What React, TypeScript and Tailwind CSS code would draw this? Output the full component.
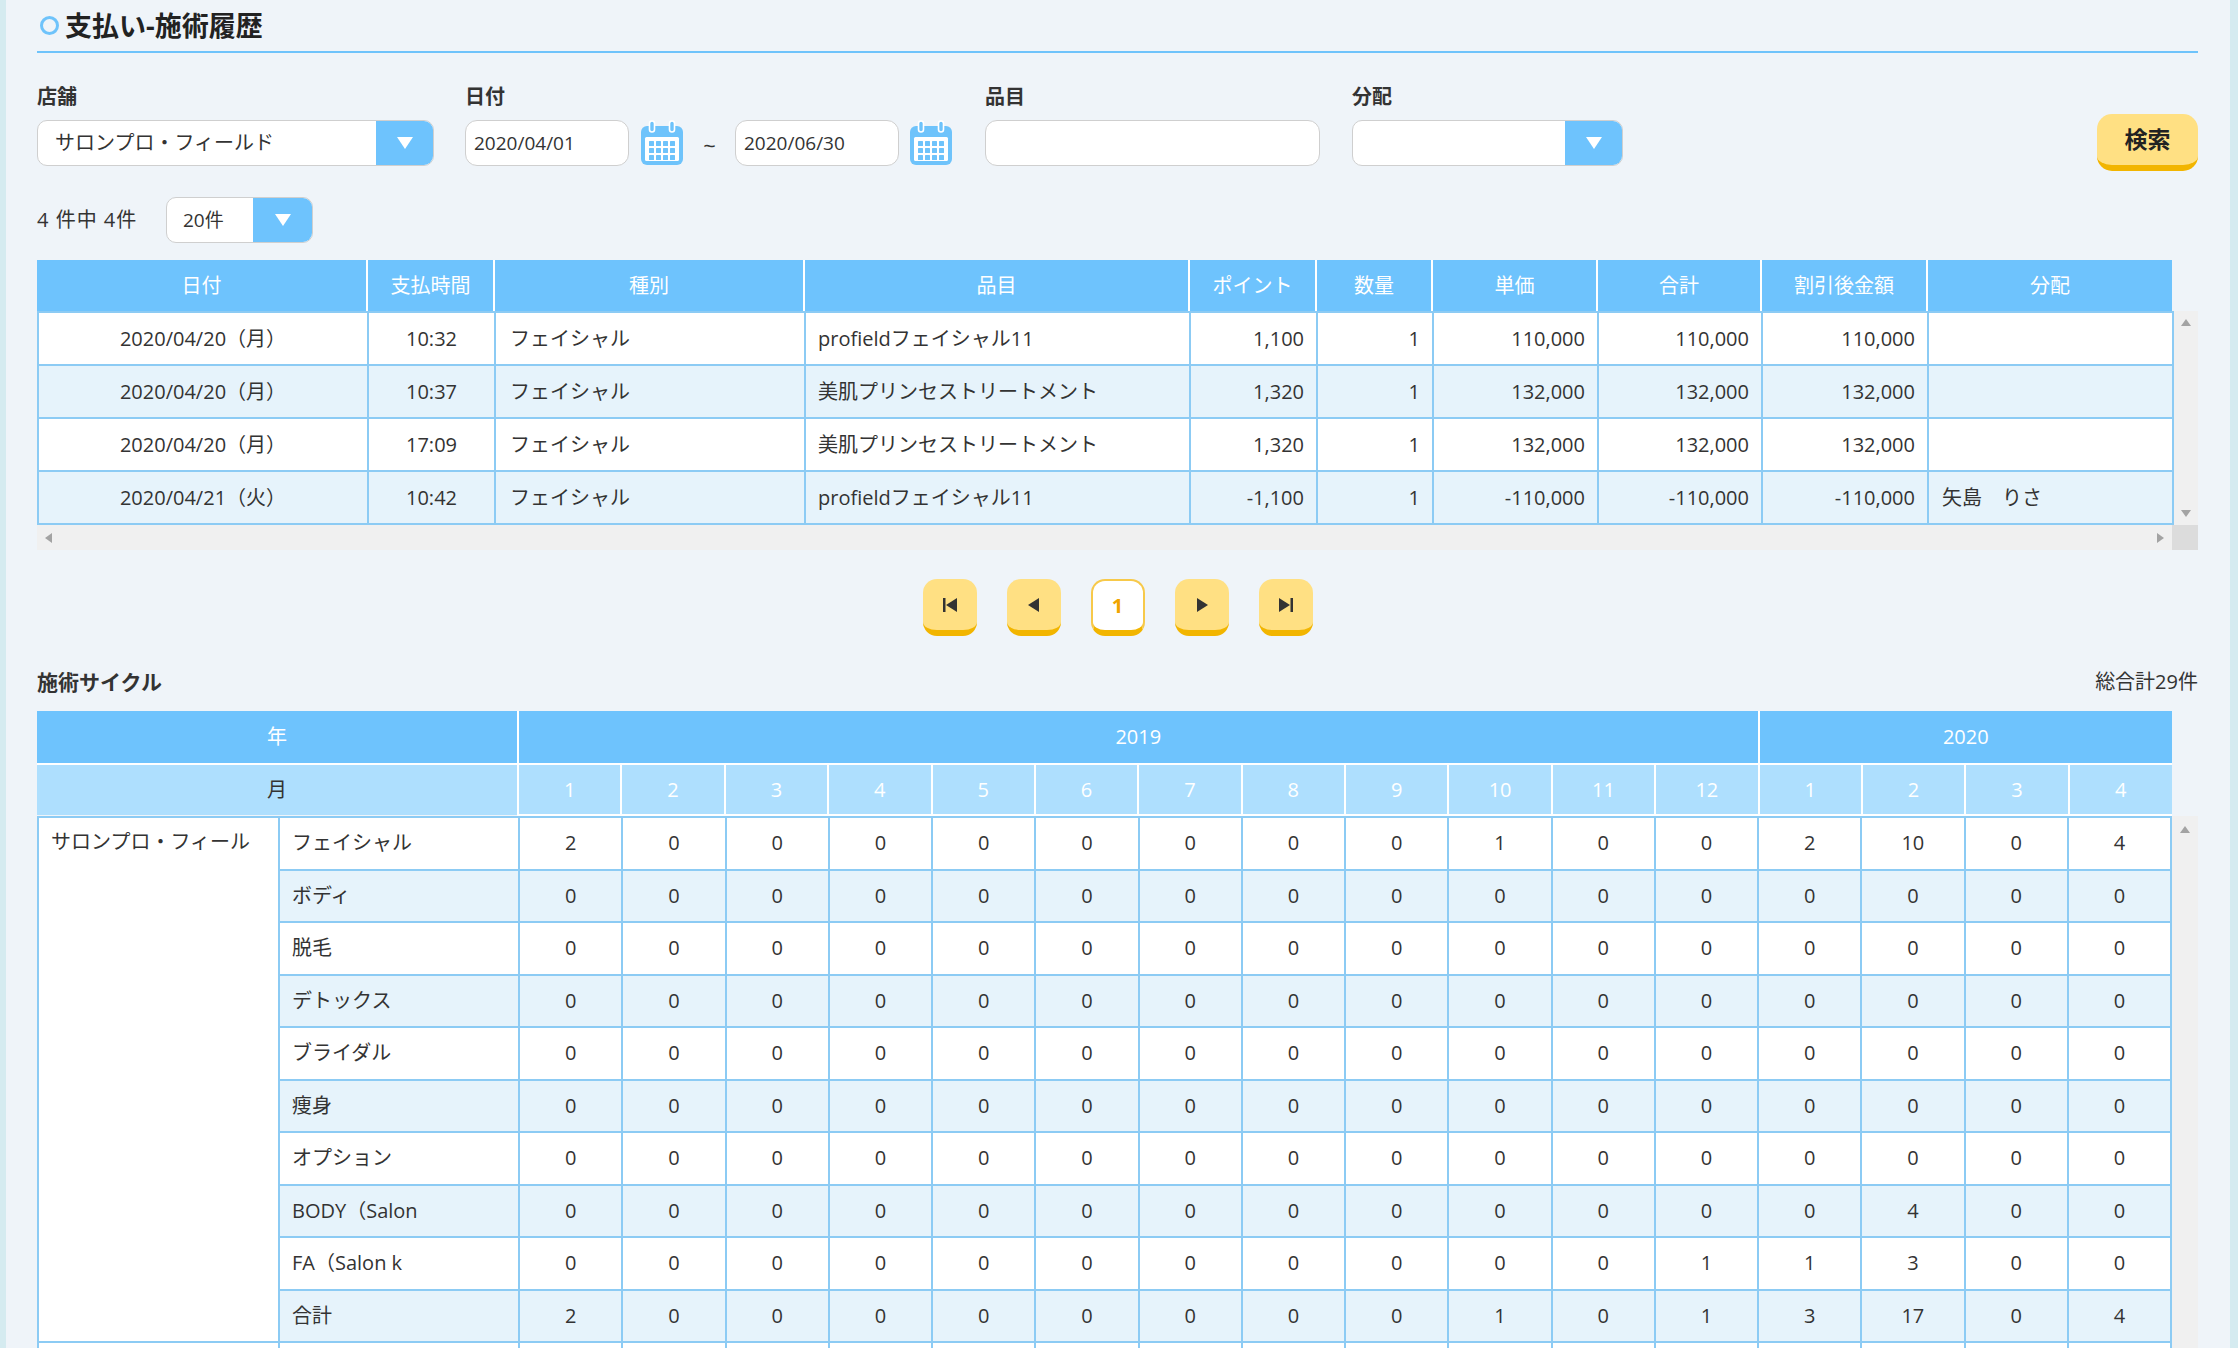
import React from "react";

const font = "font-['Open_Sans','Noto_Sans_CJK_JP',sans-serif]";

function DownTriangle() {
  return (
    <svg width="18" height="14" viewBox="0 0 18 14">
      <path d="M1 1h16L9 13z" fill="#fff" />
    </svg>
  );
}

function CalendarIcon() {
  const cells = [];
  for (let r = 0; r < 3; r++) {
    for (let c = 0; c < 4; c++) {
      cells.push(<rect key={`${r}-${c}`} x={9 + c * 7} y={21 + r * 7} width="5" height="5" rx="0.5" fill="#6ec3fb" />);
    }
  }
  return (
    <svg width="44" height="46" viewBox="0 0 44 46">
      <rect x="1" y="6" width="42" height="39" rx="6" fill="#6ec3fb" />
      <rect x="5" y="17" width="34" height="24" rx="1.5" fill="#fff" />
      <rect x="9.5" y="1" width="5" height="11" rx="2.5" fill="#6ec3fb" stroke="#fff" strokeWidth="1.6" />
      <rect x="29.5" y="1" width="5" height="11" rx="2.5" fill="#6ec3fb" stroke="#fff" strokeWidth="1.6" />
      {cells}
    </svg>
  );
}

function PageIcon({ kind }: { kind: "first" | "prev" | "next" | "last" }) {
  return (
    <svg width="18" height="16" viewBox="0 0 18 16" fill="#333">
      {kind === "first" && (
        <>
          <rect x="2" y="1" width="2.5" height="14" />
          <path d="M16 1v14L5 8z" />
        </>
      )}
      {kind === "prev" && <path d="M14 1v14L3 8z" />}
      {kind === "next" && <path d="M4 1v14l11-7z" />}
      {kind === "last" && (
        <>
          <path d="M2 1v14l11-7z" />
          <rect x="13.5" y="1" width="2.5" height="14" />
        </>
      )}
    </svg>
  );
}

const historyRows = [
  ["2020/04/20（月）", "10:32", "フェイシャル", "profieldフェイシャル11", "1,100", "1", "110,000", "110,000", "110,000", ""],
  ["2020/04/20（月）", "10:37", "フェイシャル", "美肌プリンセストリートメント", "1,320", "1", "132,000", "132,000", "132,000", ""],
  ["2020/04/20（月）", "17:09", "フェイシャル", "美肌プリンセストリートメント", "1,320", "1", "132,000", "132,000", "132,000", ""],
  ["2020/04/21（火）", "10:42", "フェイシャル", "profieldフェイシャル11", "-1,100", "1", "-110,000", "-110,000", "-110,000", "矢島　りさ"],
];

const historyHeads = ["日付", "支払時間", "種別", "品目", "ポイント", "数量", "単価", "合計", "割引後金額", "分配"];
const historyWidths = [330, 127, 310, 385, 127, 116, 165, 164, 166, 245];
const historyAlign = [
  "text-center",
  "text-center",
  "text-left pl-[14px]",
  "text-left pl-[12px]",
  "text-right pr-[12px]",
  "text-right pr-[12px]",
  "text-right pr-[12px]",
  "text-right pr-[12px]",
  "text-right pr-[12px]",
  "text-left pl-[13px]",
];

const zeros = (n: number) => Array.from({ length: n }, () => 0);

const cycleRows: [string, number[]][] = [
  ["フェイシャル", [2, 0, 0, 0, 0, 0, 0, 0, 0, 1, 0, 0, 2, 10, 0, 4]],
  ["ボディ", zeros(16)],
  ["脱毛", zeros(16)],
  ["デトックス", zeros(16)],
  ["ブライダル", zeros(16)],
  ["痩身", zeros(16)],
  ["オプション", zeros(16)],
  ["BODY（Salon", [...zeros(12), 0, 4, 0, 0]],
  ["FA（Salon k", [...zeros(11), 1, 1, 3, 0, 0]],
  ["合計", [2, 0, 0, 0, 0, 0, 0, 0, 0, 1, 0, 1, 3, 17, 0, 4]],
];

const months = [1, 2, 3, 4, 5, 6, 7, 8, 9, 10, 11, 12, 1, 2, 3, 4];

export default function App() {
  return (
    <div className={`min-h-screen bg-[#eff4f9] border-l-[6px] border-r-[8px] border-[#d5ebf0] pl-[31px] pr-[32px] pb-[40px] text-[#333] ${font}`}>
      {/* title */}
      <div className="pt-[8px] pb-[8px] border-b-2 border-[#6ec3fb] flex items-center gap-[6px]">
        <span className="ml-[3px] w-[19px] h-[19px] rounded-full border-[3px] border-[#6ec3fb]" />
        <h1 className="text-[27px] leading-[35px] font-bold text-[#222]">支払い-施術履歴</h1>
      </div>

      {/* filters */}
      <div className="mt-[32px] flex items-start">
        <div className="flex flex-col">
          <label className="text-[20px] leading-[24px] font-bold mb-[11px]">店舗</label>
          <div className="w-[397px] h-[46px] flex bg-white border border-[#cfcfcf] rounded-[10px] overflow-hidden">
            <div className="flex-1 flex items-center pl-[17px] text-[20px]">サロンプロ・フィールド</div>
            <div className="w-[57px] bg-[#6ec3fd] flex items-center justify-center"><DownTriangle /></div>
          </div>
        </div>

        <div className="ml-[31px] flex flex-col">
          <label className="text-[20px] leading-[24px] font-bold mb-[11px]">日付</label>
          <div className="flex items-center h-[46px]">
            <div className="w-[164px] h-[46px] bg-white border border-[#cfcfcf] rounded-[12px] flex items-center pl-[8px] text-[19px]">2020/04/01</div>
            <div className="ml-[11px]"><CalendarIcon /></div>
            <span className="w-[51px] text-center text-[22px] pt-[4px]">~</span>
            <div className="w-[164px] h-[46px] bg-white border border-[#cfcfcf] rounded-[12px] flex items-center pl-[8px] text-[19px]">2020/06/30</div>
            <div className="ml-[10px]"><CalendarIcon /></div>
          </div>
        </div>

        <div className="ml-[32px] flex flex-col">
          <label className="text-[20px] leading-[24px] font-bold mb-[11px]">品目</label>
          <div className="w-[335px] h-[46px] bg-white border border-[#cfcfcf] rounded-[12px]" />
        </div>

        <div className="ml-[32px] flex flex-col">
          <label className="text-[20px] leading-[24px] font-bold mb-[11px]">分配</label>
          <div className="w-[271px] h-[46px] flex bg-white border border-[#cfcfcf] rounded-[10px] overflow-hidden">
            <div className="flex-1" />
            <div className="w-[57px] bg-[#6ec3fd] flex items-center justify-center"><DownTriangle /></div>
          </div>
        </div>

        <button className="ml-auto mt-[29px] -mb-[5px] w-[101px] h-[57px] rounded-[15px] bg-[#ffe083] border-b-[6px] border-[#f2b500] text-[23px] font-bold text-[#222]">
          検索
        </button>
      </div>

      {/* count */}
      <div className="mt-[31px] flex items-center">
        <span className="text-[20px] w-[129px] tracking-[1px]">4 件中 4件</span>
        <div className="w-[147px] h-[46px] flex bg-white border border-[#cfcfcf] rounded-[10px] overflow-hidden">
          <div className="flex-1 flex items-center pl-[16px] text-[19px]">20件</div>
          <div className="w-[59px] bg-[#6ec3fd] flex items-center justify-center"><DownTriangle /></div>
        </div>
      </div>

      {/* history table */}
      <div className="mt-[17px]">
        <table className="table-fixed border-collapse w-[2135px]">
          <colgroup>
            {historyWidths.map((w, i) => <col key={i} style={{ width: w }} />)}
          </colgroup>
          <thead>
            <tr className="h-[51px] bg-[#6ec3fd]">
              {historyHeads.map((h, i) => (
                <th key={i} className="border-x-2 border-white first:border-l-0 last:border-r-0 text-white font-normal text-[20px]">{h}</th>
              ))}
            </tr>
          </thead>
        </table>
        <div className="flex">
          <table className="table-fixed border-collapse w-[2135px]">
            <colgroup>
              {historyWidths.map((w, i) => <col key={i} style={{ width: w }} />)}
            </colgroup>
            <tbody>
              {historyRows.map((row, r) => (
                <tr key={r} className={`h-[53px] ${r % 2 === 0 ? "bg-white" : "bg-[#e6f3fb]"}`}>
                  {row.map((c, i) => (
                    <td key={i} className={`border-2 border-[#8ccbf4] text-[20px] whitespace-nowrap ${historyAlign[i]}`}>{c}</td>
                  ))}
                </tr>
              ))}
            </tbody>
          </table>
          <div className="w-[26px] bg-[#f0f0f0] flex flex-col items-center justify-between py-[8px]">
            <svg width="10" height="7" viewBox="0 0 10 7"><path d="M0 7h10L5 0z" fill="#a3a3a3" /></svg>
            <svg width="10" height="7" viewBox="0 0 10 7"><path d="M0 0h10L5 7z" fill="#a3a3a3" /></svg>
          </div>
        </div>
        <div className="flex">
          <div className="w-[2135px] h-[25px] bg-[#f0f0f0] flex items-center justify-between px-[8px]">
            <svg width="7" height="10" viewBox="0 0 7 10"><path d="M7 0v10L0 5z" fill="#a3a3a3" /></svg>
            <svg width="7" height="10" viewBox="0 0 7 10"><path d="M0 0v10l7-5z" fill="#a3a3a3" /></svg>
          </div>
          <div className="w-[26px] h-[25px] bg-[#dcdcdc]" />
        </div>
      </div>

      {/* pagination */}
      <div className="mt-[29px] flex justify-center gap-[30px]">
        {(["first", "prev"] as const).map((k) => (
          <button key={k} className="w-[54px] h-[57px] rounded-[14px] bg-[#ffe083] border-b-[6px] border-[#f2b500] flex items-center justify-center">
            <PageIcon kind={k} />
          </button>
        ))}
        <button className="w-[54px] h-[57px] rounded-[14px] bg-white border-2 border-[#f7c94a] border-b-[6px] border-b-[#f2b500] flex items-center justify-center text-[20px] font-bold text-[#f0a500]">
          1
        </button>
        {(["next", "last"] as const).map((k) => (
          <button key={k} className="w-[54px] h-[57px] rounded-[14px] bg-[#ffe083] border-b-[6px] border-[#f2b500] flex items-center justify-center">
            <PageIcon kind={k} />
          </button>
        ))}
      </div>

      {/* cycle */}
      <div className="mt-[33px] flex items-center justify-between">
        <h2 className="text-[21px] leading-[26px] font-bold">施術サイクル</h2>
        <span className="text-[20px] leading-[26px]">総合計29件</span>
      </div>

      <div className="mt-[16px]">
        <table className="table-fixed border-collapse w-[2135px]">
          <colgroup>
            <col style={{ width: 241 }} />
            <col style={{ width: 240 }} />
            {months.map((_, i) => <col key={i} />)}
          </colgroup>
          <thead>
            <tr className="h-[53px] bg-[#6ec3fd] text-white">
              <th colSpan={2} className="border-r-2 border-white font-normal text-[20px]">年</th>
              <th colSpan={12} className="border-x-2 border-white font-normal text-[20px]">2019</th>
              <th colSpan={4} className="border-l-2 border-white font-normal text-[20px]">2020</th>
            </tr>
            <tr className="h-[51px] bg-[#aedffe]">
              <th colSpan={2} className="border-t-2 border-r-2 border-white font-normal text-[20px] text-[#333]">月</th>
              {months.map((m, i) => (
                <th key={i} className="border-2 border-white last:border-r-0 font-normal text-[20px] text-white">{m}</th>
              ))}
            </tr>
          </thead>
        </table>
        <div className="flex">
          <table className="table-fixed border-collapse w-[2135px]">
            <colgroup>
              <col style={{ width: 241 }} />
              <col style={{ width: 240 }} />
              {months.map((_, i) => <col key={i} />)}
            </colgroup>
            <tbody>
              {cycleRows.map(([name, vals], r) => (
                <tr key={r} className={`h-[52.5px] ${r % 2 === 0 ? "bg-white" : "bg-[#e6f3fb]"}`}>
                  {r === 0 && (
                    <td rowSpan={cycleRows.length} className="bg-white border-2 border-[#8ccbf4] align-top pl-[12px] text-[20px] leading-[48px] whitespace-nowrap overflow-hidden">
                      サロンプロ・フィール
                    </td>
                  )}
                  <td className="border-2 border-[#8ccbf4] pl-[12px] text-[20px] whitespace-nowrap overflow-hidden">{name}</td>
                  {vals.map((v, i) => (
                    <td key={i} className="border-2 border-[#8ccbf4] text-center text-[20px]">{v}</td>
                  ))}
                </tr>
              ))}
              <tr className="h-[52px] bg-white">
                <td className="border-2 border-[#8ccbf4]" />
                <td className="border-2 border-[#8ccbf4]" />
                {months.map((_, i) => <td key={i} className="border-2 border-[#8ccbf4]" />)}
              </tr>
            </tbody>
          </table>
          <div className="w-[26px] bg-[#f0f0f0] flex flex-col items-center pt-[10px]">
            <svg width="10" height="7" viewBox="0 0 10 7"><path d="M0 7h10L5 0z" fill="#a3a3a3" /></svg>
          </div>
        </div>
      </div>
    </div>
  );
}
